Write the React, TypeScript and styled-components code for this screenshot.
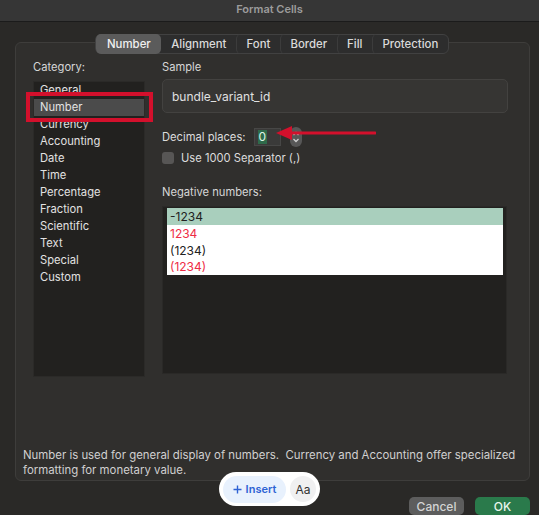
import * as React from 'react';
import styled, { createGlobalStyle } from 'styled-components';

const Global = createGlobalStyle`
  html, body {
    margin: 0;
    padding: 0;
    background: #2a2927;
  }
  body {
    font-family: Inter, "Liberation Sans", sans-serif;
    -webkit-font-smoothing: antialiased;
  }
`;

const Window = styled.div`
  position: relative;
  width: 539px;
  height: 515px;
  overflow: hidden;
  background: #2a2927;
  color: #dcdcdc;
  font-size: 11px;
`;

const TitleBar = styled.div`
  height: 21px;
  line-height: 19px;
  background: #363636;
  border-bottom: 1px solid #1b1b1b;
  text-align: center;
  font-weight: 600;
  font-size: 11px;
  color: #9c9c9c;
`;

const Tabs = styled.div`
  position: relative;
  z-index: 1;
  display: flex;
  width: max-content;
  height: 20px;
  margin: 12px 0 0 95px;
  background: #2d2d2d;
  border: 1px solid #414141;
  border-radius: 6px;
  box-sizing: border-box;
`;

const Tab = styled.div<{ $active?: boolean; $sep?: boolean }>`
  display: flex;
  align-items: center;
  padding: 0 ${(p) => (p.$active ? 10 : 9.5)}px;
  font-size: 11.4px;
  font-weight: 500;
  color: ${(p) => (p.$active ? '#f0f0f0' : '#dadada')};
  background: ${(p) => (p.$active ? '#5b5b5b' : 'transparent')};
  border-radius: 5px;
  margin: -1px 0;
  border-left: ${(p) => (p.$sep ? '1px solid #3c3c3c' : '1px solid transparent')};
`;

const Group = styled.div`
  display: flex;
  flex-direction: column;
  margin: -12px 0 0 15px;
  width: 515px;
  height: 439px;
  box-sizing: border-box;
  background: #302f2d;
  border: 1px solid #3e3d3b;
  border-radius: 6px;
`;

const Columns = styled.div`
  display: grid;
  grid-template-columns: 112px 346px;
  column-gap: 17px;
  padding: 17px 0 0 17px;
`;

const Label = styled.div`
  height: 14px;
  line-height: 14px;
  font-size: 11.2px;
  color: #d6d6d6;
`;

const CategoryList = styled.div`
  position: relative;
  margin-top: 7px;
  height: 296px;
  background: #22211f;
  border: 1px solid #2b2a28;
  box-sizing: border-box;
`;

const CategoryItem = styled.div<{ $selected?: boolean }>`
  height: 17px;
  line-height: 17px;
  padding-left: 6px;
  font-size: 11.2px;
  color: #e2e2e2;
  background: ${(p) => (p.$selected ? '#4b4b4b' : 'transparent')};
`;

const Highlight = styled.div`
  position: absolute;
  left: -8px;
  top: 10px;
  width: 127px;
  height: 30px;
  box-sizing: border-box;
  border: 4px solid #d3102c;
`;

const RightCol = styled.div`
  display: flex;
  flex-direction: column;
`;

const SampleBox = styled.div`
  margin-top: 5px;
  height: 34px;
  box-sizing: border-box;
  display: flex;
  align-items: center;
  padding-left: 9px;
  background: #363533;
  border: 1px solid #434240;
  border-radius: 5px;
  font-size: 12px;
  color: #e0e0e0;
`;

const DecimalRow = styled.div`
  position: relative;
  display: flex;
  align-items: center;
  margin-top: 15px;
  height: 18px;
  font-size: 11.2px;
`;

const NumberInput = styled.div`
  margin-left: 8px;
  width: 27px;
  height: 18px;
  box-sizing: border-box;
  display: flex;
  align-items: center;
  padding-left: 3px;
  background: #3a3a39;
  border: 1px solid #474746;
  font-size: 12px;
`;

const SelectedText = styled.span`
  background: #2e6a4a;
  color: #dff5e8;
  padding: 0 1px;
  line-height: 14px;
`;

const Stepper = styled.div`
  margin-left: 9px;
  width: 12px;
  height: 20px;
  border-radius: 6px;
  background: #575757;
  display: flex;
  align-items: center;
  justify-content: center;
`;

const Arrow = styled.svg`
  position: absolute;
  left: 114px;
  top: -4px;
`;

const CheckRow = styled.div`
  display: flex;
  align-items: center;
  gap: 7px;
  margin-top: 5px;
  height: 14px;
  font-size: 11.2px;
`;

const CheckBox = styled.div`
  width: 12px;
  height: 12px;
  border-radius: 3px;
  background: #575655;
`;

const NegLabel = styled(Label)`
  margin-top: 20px;
`;

const NegBox = styled.div`
  margin-top: 7px;
  width: 345px;
  height: 168px;
  box-sizing: border-box;
  padding: 1px 3px 0 4px;
  background: #22211f;
  border: 1px solid #2a2927;
`;

const NegList = styled.div`
  background: #ffffff;
`;

const NegItem = styled.div<{ $red?: boolean; $selected?: boolean }>`
  height: 16.75px;
  line-height: 17px;
  padding-left: 3px;
  font-size: 12px;
  color: ${(p) => (p.$red ? '#ee2c45' : '#222')};
  background: ${(p) => (p.$selected ? '#a9cfbd' : 'transparent')};
`;

const Description = styled.div`
  margin-top: auto;
  padding: 0 4px 2px 7px;
  font-size: 11.4px;
  line-height: 15px;
  color: #d0d0d0;
`;

const Footer = styled.div`
  display: flex;
  justify-content: flex-end;
  gap: 11px;
  padding: 16px 9px 0 0;
`;

const Button = styled.div<{ $primary?: boolean }>`
  width: 55px;
  height: 18px;
  border-radius: 5px;
  display: flex;
  align-items: center;
  justify-content: center;
  font-size: 12px;
  font-weight: 500;
  color: ${(p) => (p.$primary ? '#e8f5ec' : '#d4d4d4')};
  background: ${(p) => (p.$primary ? '#2a7a4b' : '#5d5d5d')};
`;

const InsertPill = styled.div`
  position: absolute;
  left: 219px;
  top: 472px;
  width: 101px;
  height: 34px;
  box-sizing: border-box;
  padding: 4px;
  display: flex;
  align-items: center;
  gap: 4px;
  background: #ffffff;
  border-radius: 17px;
`;

const InsertButton = styled.div`
  width: 63px;
  height: 27px;
  border-radius: 14px;
  background: #e8f1fd;
  color: #2e62d4;
  font-size: 11px;
  font-weight: 600;
  display: flex;
  align-items: center;
  justify-content: center;
  gap: 4px;
`;

const AaButton = styled.div`
  width: 26px;
  height: 26px;
  border-radius: 50%;
  background: #f0f0f1;
  color: #333;
  font-size: 12px;
  display: flex;
  align-items: center;
  justify-content: center;
`;

const categories = [
  'General',
  'Number',
  'Currency',
  'Accounting',
  'Date',
  'Time',
  'Percentage',
  'Fraction',
  'Scientific',
  'Text',
  'Special',
  'Custom',
];

const tabs = ['Number', 'Alignment', 'Font', 'Border', 'Fill', 'Protection'];

const negatives = [
  { text: '-1234', red: false },
  { text: '1234', red: true },
  { text: '(1234)', red: false },
  { text: '(1234)', red: true },
];

export default function App() {
  return (
    <>
      <Global />
      <Window>
        <TitleBar>Format Cells</TitleBar>
        <Tabs>
          {tabs.map((t, i) => (
            <Tab key={t} $active={i === 0} $sep={i > 1}>
              {t}
            </Tab>
          ))}
        </Tabs>
        <Group>
          <Columns>
            <div>
              <Label>Category:</Label>
              <CategoryList>
                {categories.map((c) => (
                  <CategoryItem key={c} $selected={c === 'Number'}>
                    {c}
                  </CategoryItem>
                ))}
                <Highlight />
              </CategoryList>
            </div>
            <RightCol>
              <Label>Sample</Label>
              <SampleBox>bundle_variant_id</SampleBox>
              <DecimalRow>
                Decimal places:
                <NumberInput>
                  <SelectedText>0</SelectedText>
                </NumberInput>
                <Stepper>
                  <svg width="8" height="16" viewBox="0 0 8 16">
                    <path d="M1.5 6 L4 3.5 L6.5 6" fill="none" stroke="#cfcfcf" strokeWidth="1.3" />
                    <path d="M1.5 10 L4 12.5 L6.5 10" fill="none" stroke="#cfcfcf" strokeWidth="1.3" />
                  </svg>
                </Stepper>
                <Arrow width="100" height="18" viewBox="0 0 100 18">
                  <path d="M14 9 L99 9" stroke="#d3102c" strokeWidth="3" strokeLinecap="round" />
                  <path d="M0 9 L16 2 L16 16 Z" fill="#d3102c" />
                </Arrow>
              </DecimalRow>
              <CheckRow>
                <CheckBox />
                Use 1000 Separator (,)
              </CheckRow>
              <NegLabel>Negative numbers:</NegLabel>
              <NegBox>
                <NegList>
                  {negatives.map((n, i) => (
                    <NegItem key={i} $red={n.red} $selected={i === 0}>
                      {n.text}
                    </NegItem>
                  ))}
                </NegList>
              </NegBox>
            </RightCol>
          </Columns>
          <Description>
            Number is used for general display of numbers.&nbsp; Currency and Accounting offer specialized
            formatting for monetary value.
          </Description>
        </Group>
        <Footer>
          <Button>Cancel</Button>
          <Button $primary>OK</Button>
        </Footer>
        <InsertPill>
          <InsertButton>
            <svg width="9" height="9" viewBox="0 0 9 9">
              <path d="M4.5 0.5 V8.5 M0.5 4.5 H8.5" stroke="#2e62d4" strokeWidth="1.4" />
            </svg>
            Insert
          </InsertButton>
          <AaButton>Aa</AaButton>
        </InsertPill>
      </Window>
    </>
  );
}
